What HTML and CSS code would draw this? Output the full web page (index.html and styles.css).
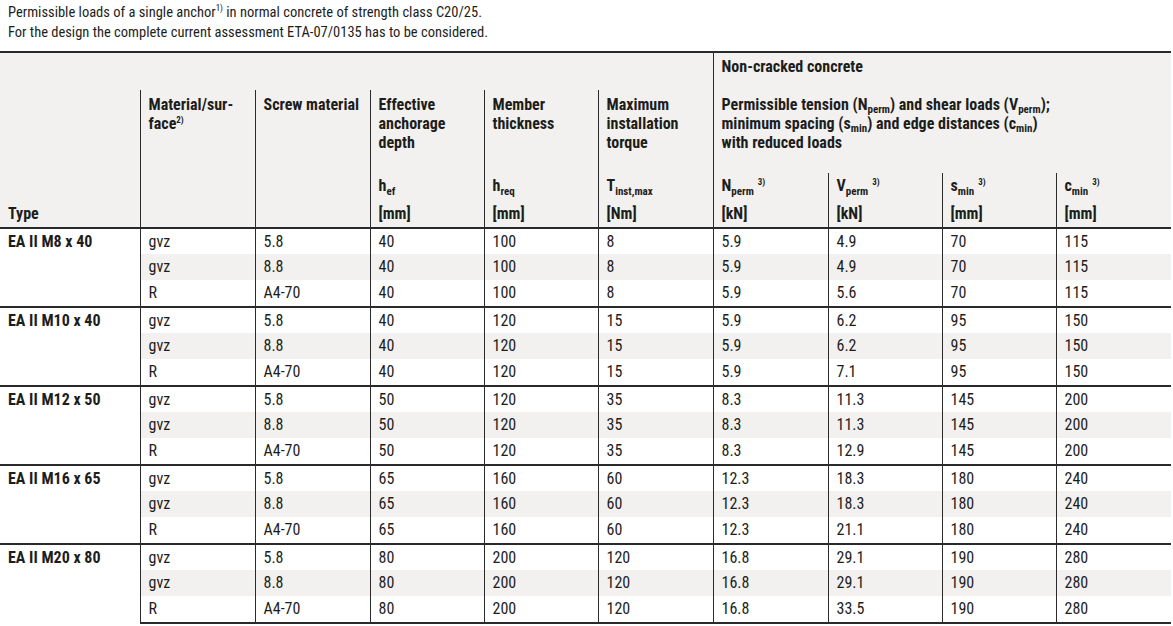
FILE: index.html
```html
<!DOCTYPE html>
<html lang="en">
<head>
<meta charset="utf-8">
<title>Permissible loads EA II</title>
<link rel="stylesheet" href="styles.css">
</head>
<body>
<p class="intro">Permissible loads of a single anchor<sup>1)</sup> in normal concrete of strength class C20/25.<br>For the design the complete current assessment ETA-07/0135 has to be considered.</p>
<table class="loads">
  <colgroup>
    <col class="c-type"><col class="c-w"><col class="c-w"><col class="c-n"><col class="c-n"><col class="c-w"><col class="c-w"><col class="c-n"><col class="c-n"><col class="c-w">
  </colgroup>
  <thead>
    <tr class="r1">
      <th colspan="6"></th>
      <th colspan="4" class="bl">Non-cracked concrete</th>
    </tr>
    <tr class="r2">
      <th rowspan="2" class="type-h">Type</th>
      <th rowspan="2" class="bl">Material/sur-<br>face<sup>2)</sup></th>
      <th rowspan="2" class="bl">Screw material</th>
      <th class="bl">Effective<br>anchorage<br>depth</th>
      <th class="bl">Member<br>thickness</th>
      <th class="bl">Maximum<br>installation<br>torque</th>
      <th colspan="4" class="bl desc">Permissible tension (N<sub>perm</sub>) and shear loads (V<sub>perm</sub>);<br>minimum spacing (s<sub>min</sub>) and edge distances (c<sub>min</sub>)<br>with reduced loads</th>
    </tr>
    <tr class="r3">
      <th class="bl"><div class="sym">h<sub>ef</sub></div><div>[mm]</div></th>
      <th class="bl"><div class="sym">h<sub>req</sub></div><div>[mm]</div></th>
      <th class="bl"><div class="sym">T<sub>inst,max</sub></div><div>[Nm]</div></th>
      <th class="bl"><div class="sym">N<sub>perm</sub><sup>3)</sup></div><div>[kN]</div></th>
      <th class="bl"><div class="sym">V<sub>perm</sub><sup>3)</sup></div><div>[kN]</div></th>
      <th class="bl"><div class="sym">s<sub>min</sub><sup>3)</sup></div><div>[mm]</div></th>
      <th class="bl"><div class="sym">c<sub>min</sub><sup>3)</sup></div><div>[mm]</div></th>
    </tr>
  </thead>
  <tbody>
    <tr class="first"><td rowspan="3" class="type">EA II M8 x 40</td><td>gvz</td><td>5.8</td><td>40</td><td>100</td><td>8</td><td>5.9</td><td>4.9</td><td>70</td><td>115</td></tr>
    <tr class="alt"><td>gvz</td><td>8.8</td><td>40</td><td>100</td><td>8</td><td>5.9</td><td>4.9</td><td>70</td><td>115</td></tr>
    <tr><td>R</td><td>A4-70</td><td>40</td><td>100</td><td>8</td><td>5.9</td><td>5.6</td><td>70</td><td>115</td></tr>

    <tr class="first"><td rowspan="3" class="type">EA II M10 x 40</td><td>gvz</td><td>5.8</td><td>40</td><td>120</td><td>15</td><td>5.9</td><td>6.2</td><td>95</td><td>150</td></tr>
    <tr class="alt"><td>gvz</td><td>8.8</td><td>40</td><td>120</td><td>15</td><td>5.9</td><td>6.2</td><td>95</td><td>150</td></tr>
    <tr><td>R</td><td>A4-70</td><td>40</td><td>120</td><td>15</td><td>5.9</td><td>7.1</td><td>95</td><td>150</td></tr>

    <tr class="first"><td rowspan="3" class="type">EA II M12 x 50</td><td>gvz</td><td>5.8</td><td>50</td><td>120</td><td>35</td><td>8.3</td><td>11.3</td><td>145</td><td>200</td></tr>
    <tr class="alt"><td>gvz</td><td>8.8</td><td>50</td><td>120</td><td>35</td><td>8.3</td><td>11.3</td><td>145</td><td>200</td></tr>
    <tr><td>R</td><td>A4-70</td><td>50</td><td>120</td><td>35</td><td>8.3</td><td>12.9</td><td>145</td><td>200</td></tr>

    <tr class="first"><td rowspan="3" class="type">EA II M16 x 65</td><td>gvz</td><td>5.8</td><td>65</td><td>160</td><td>60</td><td>12.3</td><td>18.3</td><td>180</td><td>240</td></tr>
    <tr class="alt"><td>gvz</td><td>8.8</td><td>65</td><td>160</td><td>60</td><td>12.3</td><td>18.3</td><td>180</td><td>240</td></tr>
    <tr><td>R</td><td>A4-70</td><td>65</td><td>160</td><td>60</td><td>12.3</td><td>21.1</td><td>180</td><td>240</td></tr>

    <tr class="first"><td rowspan="3" class="type">EA II M20 x 80</td><td>gvz</td><td>5.8</td><td>80</td><td>200</td><td>120</td><td>16.8</td><td>29.1</td><td>190</td><td>280</td></tr>
    <tr class="alt"><td>gvz</td><td>8.8</td><td>80</td><td>200</td><td>120</td><td>16.8</td><td>29.1</td><td>190</td><td>280</td></tr>
    <tr class="last"><td>R</td><td>A4-70</td><td>80</td><td>200</td><td>120</td><td>16.8</td><td>33.5</td><td>190</td><td>280</td></tr>
  </tbody>
</table>
</body>
</html>
```

FILE: styles.css
```css
body {
  margin: 0;
  background: #ffffff;
  color: #1d1d1b;
  font-family: "Liberation Sans Narrow", "Roboto Condensed", "DejaVu Sans Condensed", "Liberation Sans", sans-serif;
  font-size: 16px;
}

.intro {
  margin: 0 0 8px;
  padding: 3px 8px 0;
  line-height: 20px;
  font-size: 14.5px;
}

sup {
  font-size: 9px;
  line-height: 0;
  vertical-align: 6px;
}

sub {
  font-size: 11px;
  line-height: 0;
  vertical-align: -4px;
}

.loads {
  border-collapse: collapse;
  table-layout: fixed;
  width: 1171px;
}

.c-type { width: 140px; }
.c-w { width: 115px; }
.c-n { width: 114px; }

.loads thead th {
  background: #f2f1f0;
  font-weight: bold;
  text-align: left;
  vertical-align: top;
  padding: 0 8px;
  line-height: 19px;
}

.loads .r1 th {
  border-top: 2px solid #2a2a2a;
  height: 33px;
  padding-top: 4px;
}

.loads .r2 th {
  height: 78px;
  padding-top: 5px;
}

.loads .r3 th {
  height: 46px;
  padding-top: 3px;
  padding-bottom: 4px;
}

.loads th.desc sub {
  vertical-align: -3px;
}

.loads th.type-h {
  vertical-align: bottom;
  padding-bottom: 4px;
}

.loads th.bl {
  border-left: 1px solid #2a2a2a;
}

.sym {
  height: 28px;
}

.sym sup {
  margin-left: 4px;
}

.loads tbody td {
  height: 26px;
  padding: 0 8px;
  line-height: 26px;
  border-left: 1px solid #2a2a2a;
  vertical-align: middle;
  white-space: nowrap;
}

.loads tbody td.type {
  border-left: none;
  font-weight: bold;
  vertical-align: top;
  line-height: 25px;
}

.loads tr.first td {
  border-top: 2px solid #2a2a2a;
  height: 25px;
  line-height: 25px;
}

.loads tr.alt td {
  background: #f2f1f0;
}

.loads tr.last td {
  border-bottom: 2px solid #2a2a2a;
}
```
